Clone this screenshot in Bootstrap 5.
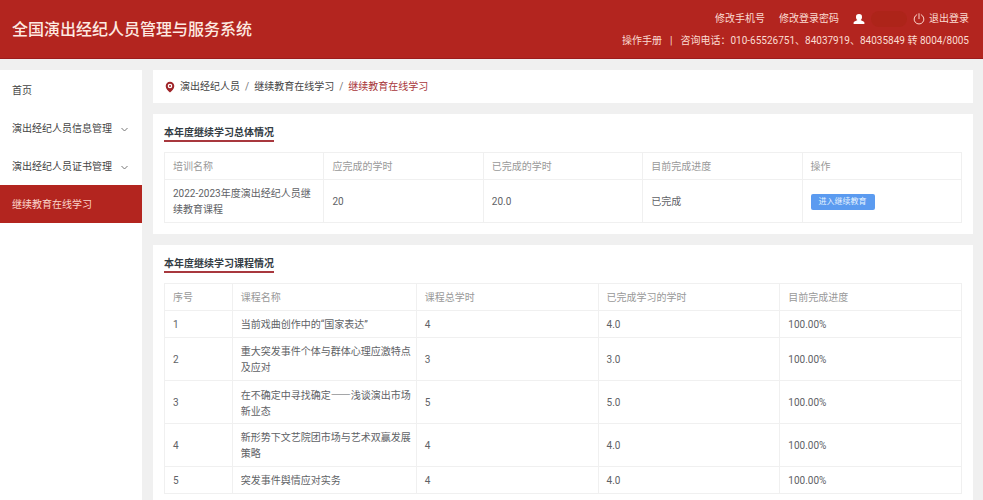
<!DOCTYPE html>
<html lang="zh-CN">
<head>
<meta charset="utf-8">
<meta name="viewport" content="width=device-width, initial-scale=1">
<title>全国演出经纪人员管理与服务系统</title>
<link href="https://cdn.jsdelivr.net/npm/bootstrap@5.3.0/dist/css/bootstrap.min.css" rel="stylesheet">
<style>
  :root { --brand: #b3251f; --brand-dark: #9c1c1c; --ink: #444; --page: #f0f0f0; }
  body { font-family: Roboto, "Noto Sans CJK SC", sans-serif; font-size: 10px; line-height: 16px; color: var(--ink); background: var(--page); }
  a { color: inherit; text-decoration: none; }
  .site-header { background: var(--brand); color: #fbdcd2; padding: 11px 14px 9px 12px; border-bottom: 1px solid var(--brand-dark); }
  .site-title { font-size: 16px; line-height: 24px; font-weight: 500; color: #fdeae2; }
  .top-links { gap: 14px; }
  .top-lines { gap: 6px; }
  .user-box { gap: 6px; }
  .user-name { width: 36px; height: 16px; border-radius: 8px; background: #ad2419; margin-right: -8px; }
  .page-body { padding-top: 11px; gap: 11px; min-height: calc(100vh - 59px); }
  .side-menu { flex: 0 0 142px; background: #fff; padding-top: 1px; }
  .side-menu .nav-link { color: var(--ink); padding: 12px 14px 10px 12px; border-radius: 0; }
  .side-menu .nav-link.active { background: var(--brand); color: #fbd5cc; }
  .main-area { gap: 11px; padding-right: 10px; min-width: 0; }
  .panel { background: #fff; padding: 12px 11px 11px; }
  .crumb-bar { padding: 9px 12px 8px; gap: 5px; }
  .crumb-bar .breadcrumb-item + .breadcrumb-item { padding-left: 5px; }
  .crumb-bar .breadcrumb-item + .breadcrumb-item::before { padding-right: 5px; color: #777; }
  .crumb-bar .breadcrumb-item.active { color: #a8363a; }
  .panel-title { display: table; font-size: 10px; line-height: 14px; font-weight: 600; color: #333c44; border-bottom: 2px solid #a8383e; margin-bottom: 10px; }
  .data-grid { --bs-table-bg: transparent; --bs-table-color: #606266; table-layout: fixed; border-collapse: collapse; margin: 0; border-color: #f0f0f0; color: #606266; }
  .data-grid th, .data-grid td { padding: 6px 4px 4px 8px; vertical-align: middle; color: #606266; }
  .data-grid th { font-weight: 400; color: #999; }
  .data-grid .cjk-text { font-family: "Noto Sans CJK SC", sans-serif; }
  .col-no { width: 8.5%; }
  .col-name { width: 23.1%; }
  .btn-enter { display: block; background: #5b9bf0; color: #e8f4ff; font-size: 8px; line-height: 16px; padding: 0 8px; border: 0; border-radius: 2px; }
  .btn-enter:hover { background: #468bea; color: #fff; }
</style>
<script src="https://cdn.jsdelivr.net/npm/bootstrap@5.3.0/dist/js/bootstrap.bundle.min.js" defer></script>
</head>
<body>
<header class="site-header d-flex align-items-center justify-content-between">
  <h1 class="site-title mb-0">全国演出经纪人员管理与服务系统</h1>
  <div class="top-lines d-flex flex-column align-items-end">
    <div class="top-links d-flex align-items-center">
      <a href="#">修改手机号</a>
      <a href="#">修改登录密码</a>
      <span class="user-box d-flex align-items-center">
        <svg width="12" height="12" viewBox="0 0 12 12" fill="#fff" aria-hidden="true"><path d="M6 1a3 3 0 0 1 3 3.200C9 5.500 8.300 6.600 7.500 7.100l3 1.300c.6.3.9.7.9 1.300V11H.6V9.700c0-.6.3-1 .9-1.300l3-1.300C3.700 6.600 3 5.500 3 4.200A3 3 0 0 1 6 1z"/></svg>
        <span class="user-name"></span>
      </span>
      <a href="#" class="d-flex align-items-center gap-1">
        <svg width="12" height="12" viewBox="0 0 12 12" fill="none" stroke="#fbd5cc" stroke-linecap="round" aria-hidden="true"><path d="M3.800 1.700a4.900 4.900 0 1 0 4.400 0M6 .7v5"/></svg>
        退出登录</a>
    </div>
    <div class="d-flex">
      <a href="#">操作手册</a>
      <span class="px-2">|</span>
      <span>咨询电话：010-65526751、84037919、84035849 转 8004/8005</span>
    </div>
  </div>
</header>

<div class="page-body d-flex">
  <nav class="side-menu nav flex-column flex-nowrap" aria-label="主菜单">
    <a class="nav-link" href="#">首页</a>
    <a class="nav-link d-flex align-items-center justify-content-between" href="#">演出经纪人员信息管理
      <svg width="7" height="7" viewBox="0 0 7 7" fill="none" stroke="#777" aria-hidden="true"><path d="M.5 2l3 3 3-3"/></svg></a>
    <a class="nav-link d-flex align-items-center justify-content-between" href="#">演出经纪人员证书管理
      <svg width="7" height="7" viewBox="0 0 7 7" fill="none" stroke="#777" aria-hidden="true"><path d="M.5 2l3 3 3-3"/></svg></a>
    <a class="nav-link active" href="#" aria-current="page">继续教育在线学习</a>
  </nav>

  <main class="main-area d-flex flex-column flex-grow-1">
    <nav class="panel crumb-bar d-flex align-items-center" aria-label="面包屑">
      <svg width="10" height="12" viewBox="0 0 10 12" aria-hidden="true"><path fill="#9f2529" fill-rule="evenodd" d="M5 .8a4.300 4.300 0 0 1 4.300 4.300C9.300 7.800 6.800 10 5 11.500 3.200 10 .7 7.800.7 5.100A4.300 4.300 0 0 1 5 .8zM5 2.700a2.300 2.300 0 1 0 0 4.600 2.300 2.300 0 0 0 0-4.600z"/><circle cx="5" cy="5" r="1" fill="#9f2529"/></svg>
      <ol class="breadcrumb mb-0">
        <li class="breadcrumb-item"><a href="#">演出经纪人员</a></li>
        <li class="breadcrumb-item"><a href="#">继续教育在线学习</a></li>
        <li class="breadcrumb-item active" aria-current="page">继续教育在线学习</li>
      </ol>
    </nav>

    <section class="panel">
      <h2 class="panel-title">本年度继续学习总体情况</h2>
      <table class="table table-bordered data-grid">
        <thead>
          <tr><th scope="col">培训名称</th><th scope="col">应完成的学时</th><th scope="col">已完成的学时</th><th scope="col">目前完成进度</th><th scope="col">操作</th></tr>
        </thead>
        <tbody>
          <tr><td>2022-2023年度演出经纪人员继续教育课程</td><td>20</td><td>20.0</td><td>已完成</td><td><button type="button" class="btn btn-enter">进入继续教育</button></td></tr>
        </tbody>
      </table>
    </section>

    <section class="panel">
      <h2 class="panel-title">本年度继续学习课程情况</h2>
      <table class="table table-bordered data-grid">
        <thead>
          <tr><th scope="col" class="col-no">序号</th><th scope="col" class="col-name">课程名称</th><th scope="col">课程总学时</th><th scope="col">已完成学习的学时</th><th scope="col">目前完成进度</th></tr>
        </thead>
        <tbody>
          <tr><td>1</td><td>当前戏曲创作中的“国家表达”</td><td>4</td><td>4.0</td><td>100.00%</td></tr>
          <tr><td>2</td><td>重大突发事件个体与群体心理应激特点及应对</td><td>3</td><td>3.0</td><td>100.00%</td></tr>
          <tr><td>3</td><td class="cjk-text">在不确定中寻找确定——浅谈演出市场新业态</td><td>5</td><td>5.0</td><td>100.00%</td></tr>
          <tr><td>4</td><td>新形势下文艺院团市场与艺术双赢发展策略</td><td>4</td><td>4.0</td><td>100.00%</td></tr>
          <tr><td>5</td><td>突发事件舆情应对实务</td><td>4</td><td>4.0</td><td>100.00%</td></tr>
        </tbody>
      </table>
    </section>
  </main>
</div>
</body>
</html>
